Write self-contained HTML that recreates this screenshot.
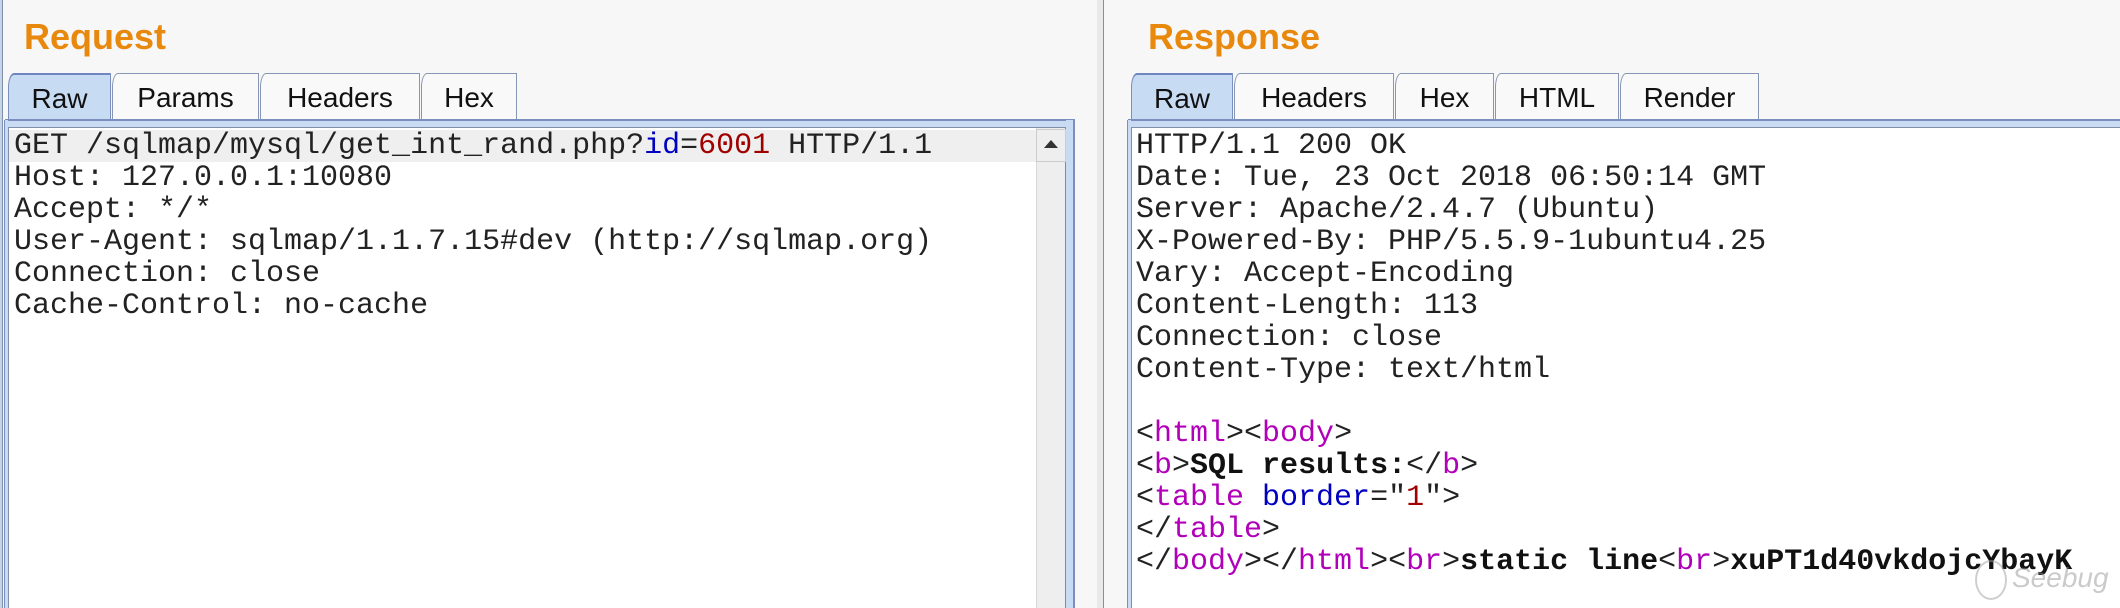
<!DOCTYPE html>
<html><head><meta charset="utf-8"><style>
*{margin:0;padding:0;box-sizing:border-box}
html,body{width:2120px;height:608px;overflow:hidden}
body{background:#f7f7f7;position:relative;font-family:"Liberation Sans",sans-serif}
.abs{position:absolute}
.title{font-weight:bold;font-size:36px;color:#e8880c;top:16px}
.tab{position:absolute;top:73px;height:47px;border:1px solid #8796b4;border-bottom:none;background:#f9f9f9;font-size:28px;color:#111;text-align:center;line-height:48px;border-top-left-radius:6px 14px}
.tab.sel{background:#c7dcf2;height:54px;border-color:#7b8fbf;border-top:2px solid #6f86c0}
.strip{position:absolute;top:119px;height:9px;background:#c9dbf2;border-top:2px solid #7b8fbf}
.box{position:absolute;top:127px;bottom:0;background:#fff;border-left:1px solid #8090a8;border-top:1px solid #8090a8}
.code{position:absolute;font-family:"Liberation Mono",monospace;font-size:30px;line-height:32px;color:#222}
.code div{height:32px;white-space:pre}
.m{color:#b000b8}.bl{color:#0000c0}.r{color:#a00000}
b{font-weight:bold;color:#111}
</style></head><body>
<div class="abs" style="left:0;top:0;width:2px;height:608px;background:#c6d4e8"></div>
<div class="abs" style="left:2px;top:0;width:1px;height:608px;background:#8090a8"></div>

<div class="abs title" style="left:24px">Request</div>
<div class="tab sel" style="left:8px;width:103px">Raw</div>
<div class="tab" style="left:112px;width:147px">Params</div>
<div class="tab" style="left:260px;width:160px">Headers</div>
<div class="tab" style="left:421px;width:96px">Hex</div>
<div class="strip" style="left:5px;width:1070px"></div>
<div class="abs" style="left:4px;top:120px;width:4px;bottom:0;background:#c9dbf2;border-left:1px solid #7b8fbf"></div>
<div class="abs" style="left:1066px;top:120px;width:9px;bottom:0;background:#c9dbf2;border-right:2px solid #7b8fbf"></div>
<div class="box" style="left:8px;width:1058px"></div>
<div class="abs" style="left:9px;top:130px;width:1027px;height:32px;background:#efefef"></div>
<div class="abs" style="left:1036px;top:128px;width:30px;bottom:0;background:#eeeeee;border-left:1px solid #d8d8d8;border-right:1px solid #888"></div>
<div class="abs" style="left:1036px;top:129px;width:30px;height:33px;border:1px solid #ccc;background:#eee"></div>
<div class="abs" style="left:1044px;top:140px;width:0;height:0;border-left:7px solid transparent;border-right:7px solid transparent;border-bottom:8px solid #333"></div>
<div class="code" style="left:14px;top:130px"><div>GET /sqlmap/mysql/get_int_rand.php?<span class="bl">id</span>=<span class="r">6001</span> HTTP/1.1</div><div>Host: 127.0.0.1:10080</div><div>Accept: */*</div><div>User-Agent: sqlmap/1.1.7.15#dev (http://sqlmap.org)</div><div>Connection: close</div><div>Cache-Control: no-cache</div></div>

<div class="abs" style="left:1097px;top:0;width:6px;height:608px;background:#e9e9e9"></div>
<div class="abs" style="left:1103px;top:0;width:1px;height:608px;background:#8090a8"></div>

<div class="abs title" style="left:1148px">Response</div>
<div class="tab sel" style="left:1131px;width:102px">Raw</div>
<div class="tab" style="left:1234px;width:160px">Headers</div>
<div class="tab" style="left:1395px;width:99px">Hex</div>
<div class="tab" style="left:1495px;width:124px">HTML</div>
<div class="tab" style="left:1620px;width:139px">Render</div>
<div class="strip" style="left:1128px;width:992px"></div>
<div class="abs" style="left:1127px;top:120px;width:4px;bottom:0;background:#c9dbf2;border-left:1px solid #7b8fbf"></div>
<div class="box" style="left:1131px;width:989px"></div>
<div class="code" style="left:1136px;top:130px"><div>HTTP/1.1 200 OK</div><div>Date: Tue, 23 Oct 2018 06:50:14 GMT</div><div>Server: Apache/2.4.7 (Ubuntu)</div><div>X-Powered-By: PHP/5.5.9-1ubuntu4.25</div><div>Vary: Accept-Encoding</div><div>Content-Length: 113</div><div>Connection: close</div><div>Content-Type: text/html</div><div></div><div>&lt;<span class="m">html</span>&gt;&lt;<span class="m">body</span>&gt;</div><div>&lt;<span class="m">b</span>&gt;<b>SQL results:</b>&lt;/<span class="m">b</span>&gt;</div><div>&lt;<span class="m">table</span> <span class="bl">border</span>="<span class="r">1</span>"&gt;</div><div>&lt;/<span class="m">table</span>&gt;</div><div>&lt;/<span class="m">body</span>&gt;&lt;/<span class="m">html</span>&gt;&lt;<span class="m">br</span>&gt;<b>static line</b>&lt;<span class="m">br</span>&gt;<b>xuPT1d40vkdojcYbayK</b></div></div>
<div class="abs" style="left:1975px;top:560px;width:32px;height:40px;border:2px solid rgba(160,160,160,0.5);border-radius:50%"></div>
<div class="abs" style="left:2012px;top:562px;font-size:28px;color:rgba(150,150,150,0.5);font-style:italic">Seebug</div>
</body></html>
